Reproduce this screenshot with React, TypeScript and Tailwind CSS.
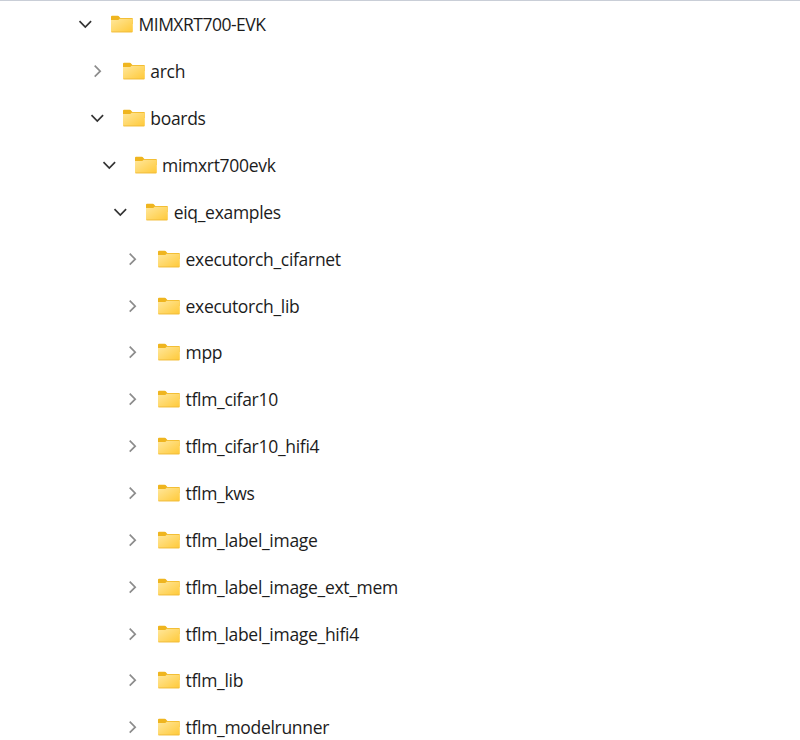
type Row = { name: string; depth: number; open?: boolean; tracking: string };

const rows: Row[] = [
  { name: "MIMXRT700-EVK", depth: 0, open: true, tracking: "tracking-[-0.5px]" },
  { name: "arch", depth: 1, tracking: "tracking-[-0.3px]" },
  { name: "boards", depth: 1, open: true, tracking: "tracking-[-0.3px]" },
  { name: "mimxrt700evk", depth: 2, open: true, tracking: "tracking-[-0.3px]" },
  { name: "eiq_examples", depth: 3, open: true, tracking: "tracking-[-0.3px]" },
  { name: "executorch_cifarnet", depth: 4, tracking: "tracking-[-0.3px]" },
  { name: "executorch_lib", depth: 4, tracking: "tracking-[-0.3px]" },
  { name: "mpp", depth: 4, tracking: "tracking-[-0.3px]" },
  { name: "tflm_cifar10", depth: 4, tracking: "tracking-[-0.3px]" },
  { name: "tflm_cifar10_hifi4", depth: 4, tracking: "tracking-[-0.3px]" },
  { name: "tflm_kws", depth: 4, tracking: "tracking-[-0.3px]" },
  { name: "tflm_label_image", depth: 4, tracking: "tracking-[-0.3px]" },
  { name: "tflm_label_image_ext_mem", depth: 4, tracking: "tracking-[-0.3px]" },
  { name: "tflm_label_image_hifi4", depth: 4, tracking: "tracking-[-0.3px]" },
  { name: "tflm_lib", depth: 4, tracking: "tracking-[-0.3px]" },
  { name: "tflm_modelrunner", depth: 4, tracking: "tracking-[-0.3px]" },
];

const indents = ["pl-[77px]", "pl-[88.8px]", "pl-[100.5px]", "pl-[112.2px]", "pl-[124px]"];

function Chevron({ open }: { open?: boolean }) {
  return (
    <svg className="h-4 w-4 shrink-0" viewBox="0 0 16 16" fill="none" strokeWidth="1.7">
      {open ? (
        <path d="M2.5 5.2 8.3 11l5.8-5.8" stroke="#333333" />
      ) : (
        <path d="m5.7 2.7 5.5 5.5-5.5 5.5" stroke="#8c8c8c" />
      )}
    </svg>
  );
}

function Folder() {
  return (
    <svg className="ml-[18px] h-[18px] w-[22px] shrink-0" viewBox="0 0 22 18">
      <defs>
        <linearGradient id="folder-front" x1="0" y1="0" x2="1" y2="1">
          <stop offset="0" stopColor="#ffe79c" />
          <stop offset="1" stopColor="#ffc937" />
        </linearGradient>
      </defs>
      <path d="M0 1.7Q0 .7 1 .7h5.6q.6 0 1 .4l1.8 1.8H21q.8 0 .8.8V9H0Z" fill="#efb51f" />
      <path d="M0 5.1h6.7q.5 0 .9-.4l1-.9H21q.8 0 .8.8v11.7q0 1-1 1H1q-1 0-1-1Z" fill="url(#folder-front)" />
      <path d="M.4 16.9h21" stroke="#eeb938" strokeWidth=".8" />
    </svg>
  );
}

export default function App() {
  return (
    <main className="h-[740px] w-[800px] overflow-hidden border-t border-[#c9ced7] bg-white font-['Open_Sans','Noto_Sans',sans-serif] text-[17.5px] text-[#1c1c1c]">
      <ul>
        {rows.map((row) => (
          <li key={row.name} className={`flex h-[46.87px] items-center ${indents[row.depth]}`}>
            <Chevron open={row.open} />
            <Folder />
            <span className={`ml-[5.5px] leading-6 whitespace-nowrap ${row.tracking}`}>{row.name}</span>
          </li>
        ))}
      </ul>
    </main>
  );
}
